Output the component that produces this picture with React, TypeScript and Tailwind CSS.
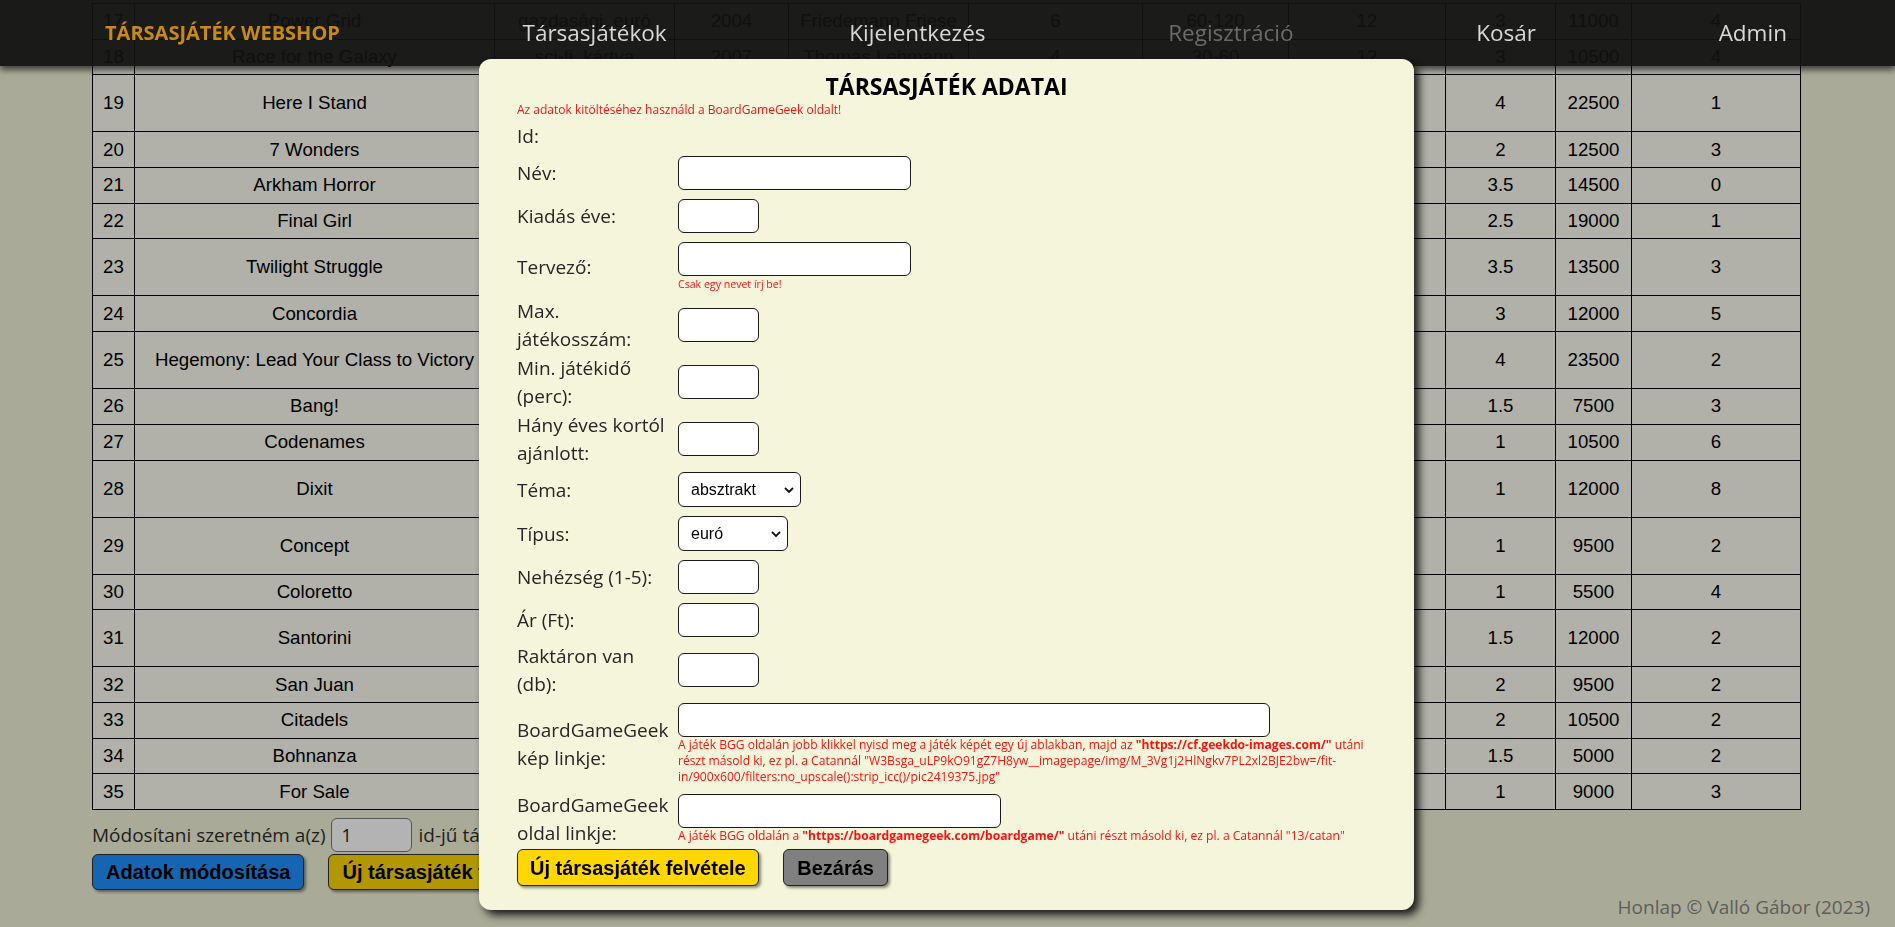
import React from 'react';

type Game = {
  id: number;
  name: string;
  theme: string;
  year: number;
  designer: string;
  players: number;
  time: string;
  age: number;
  weight: string;
  price: number;
  stock: number;
  tall?: boolean;
};

const games: Game[] = [
  { id: 17, name: 'Power Grid', theme: 'gazdasági, euró', year: 2004, designer: 'Friedemann Friese', players: 6, time: '60-120', age: 12, weight: '3', price: 11000, stock: 4 },
  { id: 18, name: 'Race for the Galaxy', theme: 'sci-fi, kártya', year: 2007, designer: 'Thomas Lehmann', players: 4, time: '30-60', age: 12, weight: '3', price: 10500, stock: 4 },
  { id: 19, name: 'Here I Stand', theme: 'történelmi', year: 2006, designer: 'Ed Beach', players: 6, time: '360', age: 12, weight: '4', price: 22500, stock: 1, tall: true },
  { id: 20, name: '7 Wonders', theme: 'civilizáció', year: 2010, designer: 'Antoine Bauza', players: 7, time: '30', age: 10, weight: '2', price: 12500, stock: 3 },
  { id: 21, name: 'Arkham Horror', theme: 'horror', year: 2005, designer: 'Richard Launius', players: 8, time: '120-240', age: 12, weight: '3.5', price: 14500, stock: 0 },
  { id: 22, name: 'Final Girl', theme: 'horror', year: 2021, designer: 'Evan Derrick', players: 1, time: '20-60', age: 14, weight: '2.5', price: 19000, stock: 1 },
  { id: 23, name: 'Twilight Struggle', theme: 'történelmi', year: 2005, designer: 'Ananda Gupta', players: 2, time: '120-180', age: 13, weight: '3.5', price: 13500, stock: 3, tall: true },
  { id: 24, name: 'Concordia', theme: 'gazdasági, euró', year: 2013, designer: 'Mac Gerdts', players: 5, time: '90', age: 13, weight: '3', price: 12000, stock: 5 },
  { id: 25, name: 'Hegemony: Lead Your Class to Victory', theme: 'gazdasági', year: 2023, designer: 'Varnavas', players: 4, time: '90-180', age: 14, weight: '4', price: 23500, stock: 2, tall: true },
  { id: 26, name: 'Bang!', theme: 'western', year: 2002, designer: 'Emiliano Sciarra', players: 7, time: '20-40', age: 8, weight: '1.5', price: 7500, stock: 3 },
  { id: 27, name: 'Codenames', theme: 'party', year: 2015, designer: 'Vlaada Chvátil', players: 8, time: '15', age: 14, weight: '1', price: 10500, stock: 6 },
  { id: 28, name: 'Dixit', theme: 'party, fantasy', year: 2008, designer: 'Jean-Louis Roubira', players: 6, time: '30', age: 8, weight: '1', price: 12000, stock: 8, tall: true },
  { id: 29, name: 'Concept', theme: 'party', year: 2013, designer: 'Gaëtan Beaujannot', players: 12, time: '40', age: 10, weight: '1', price: 9500, stock: 2, tall: true },
  { id: 30, name: 'Coloretto', theme: 'kártya', year: 2003, designer: 'Michael Schacht', players: 5, time: '30', age: 8, weight: '1', price: 5500, stock: 4 },
  { id: 31, name: 'Santorini', theme: 'absztrakt', year: 2016, designer: 'Gordon Hamilton', players: 4, time: '20', age: 8, weight: '1.5', price: 12000, stock: 2, tall: true },
  { id: 32, name: 'San Juan', theme: 'kártya', year: 2004, designer: 'Andreas Seyfarth', players: 4, time: '45-60', age: 10, weight: '2', price: 9500, stock: 2 },
  { id: 33, name: 'Citadels', theme: 'kártya', year: 2000, designer: 'Bruno Faidutti', players: 8, time: '20-60', age: 10, weight: '2', price: 10500, stock: 2 },
  { id: 34, name: 'Bohnanza', theme: 'kártya', year: 1997, designer: 'Uwe Rosenberg', players: 7, time: '45', age: 12, weight: '1.5', price: 5000, stock: 2 },
  { id: 35, name: 'For Sale', theme: 'kártya', year: 1997, designer: 'Stefan Dorra', players: 6, time: '30', age: 10, weight: '1', price: 9000, stock: 3 },
];

const colWidths = ['w-[42px]', 'w-[360px]', 'w-[180px]', 'w-[114px]', 'w-[180px]', 'w-[174px]', 'w-[146px]', 'w-[157px]', 'w-[110px]', 'w-[76px]', 'w-[169px]'];

function FormRow({ label, children }: { label: React.ReactNode; children?: React.ReactNode }) {
  return (
    <div className="flex items-center">
      <div className="w-[161px] shrink-0 leading-[28px] whitespace-nowrap">{label}</div>
      <div className="py-[4px]">{children}</div>
    </div>
  );
}

function TextInput({ width }: { width: string }) {
  return <input type="text" className={`${width} h-[34px] bg-white border border-[#1a1a1a] rounded-[6px] block`} />;
}

function Select({ width, value, options }: { width: string; value: string; options: string[] }) {
  return (
    <div className={`relative ${width}`}>
      <select
        defaultValue={value}
        className="appearance-none w-full h-[35px] bg-white border border-[#1a1a1a] rounded-[6px] pl-[12px] text-[16px] text-black font-['Liberation_Sans',Arial,sans-serif]"
      >
        {options.map((o) => (
          <option key={o}>{o}</option>
        ))}
      </select>
      <svg className="absolute right-[7px] top-[15px] pointer-events-none" width="10" height="6" viewBox="0 0 10 6">
        <path d="M1 1 L5 5 L9 1" fill="none" stroke="#111" strokeWidth="1.8" />
      </svg>
    </div>
  );
}

export default function App() {
  return (
    <div className="min-h-screen bg-[#aaaa98] font-['Open_Sans',sans-serif] pt-[3px]">
      {/* Table with games */}
      <table className="table-fixed border-collapse w-[1708px] ml-[92px] bg-[#b1b1a9] font-['Liberation_Sans',Arial,sans-serif] text-[14pt] text-black">
        <colgroup>
          {colWidths.map((w, i) => (
            <col key={i} className={w} />
          ))}
        </colgroup>
        <tbody>
          {games.map((g) => (
            <tr key={g.id} className={g.tall ? 'h-[57px]' : 'h-[35.7px]'}>
              <td className="border border-black text-center">{g.id}</td>
              <td className="border border-black text-center">{g.name}</td>
              <td className="border border-black text-center">{g.theme}</td>
              <td className="border border-black text-center">{g.year}</td>
              <td className="border border-black text-center">{g.designer}</td>
              <td className="border border-black text-center">{g.players}</td>
              <td className="border border-black text-center">{g.time}</td>
              <td className="border border-black text-center">{g.age}</td>
              <td className="border border-black text-center">{g.weight}</td>
              <td className="border border-black text-center">{g.price}</td>
              <td className="border border-black text-center">{g.stock}</td>
            </tr>
          ))}
        </tbody>
      </table>

      {/* Modify controls */}
      <div className="ml-[92px] mt-[8px] flex items-center text-[19px] text-[#1e1e1e]">
        <span>Módosítani szeretném a(z)</span>
        <input
          type="text"
          defaultValue="1"
          className="ml-[5px] mr-[7px] w-[81px] h-[34px] bg-[#b3b3b3] border border-[#555] rounded-[6px] pl-[10px] text-[18px] text-[#111]"
        />
        <span>id-jű társasjáték adatait</span>
      </div>
      <div className="ml-[92px] mt-[2px] flex gap-[24px] font-['Liberation_Sans',Arial,sans-serif] font-bold text-[20px] text-black">
        <button className="h-[36px] px-[13px] bg-[#1565b3] border border-[#222] rounded-[6px] shadow-[2px_2px_3px_rgba(0,0,0,0.45)]">
          Adatok módosítása
        </button>
        <button className="h-[36px] px-[13px] bg-[#b39700] border border-[#222] rounded-[6px] shadow-[2px_2px_3px_rgba(0,0,0,0.45)]">
          Új társasjáték felvétele
        </button>
      </div>

      {/* Footer */}
      <div className="text-right pr-[25px] mt-[3px] text-[19px] text-[#5e5e5a]">Honlap © Valló Gábor (2023)</div>

      {/* Navbar */}
      <nav className="fixed top-0 left-0 right-0 h-[66px] bg-[rgba(17,17,17,0.94)] shadow-[0_4px_6px_rgba(0,0,0,0.6)] flex items-center justify-between pl-[105px] pr-[108px] text-[22.5px] text-[#d8d8d8]">
        <span className="text-[20px] font-bold text-[#c98a14]">TÁRSASJÁTÉK WEBSHOP</span>
        <span>Társasjátékok</span>
        <span>Kijelentkezés</span>
        <span className="text-[#6b6b6b]">Regisztráció</span>
        <span>Kosár</span>
        <span>Admin</span>
      </nav>

      {/* Modal */}
      <div className="fixed left-[479px] top-[59px] w-[935px] h-[851px] bg-[#f5f5dc] rounded-[12px] shadow-[5px_5px_8px_rgba(0,0,0,0.85)] px-[38px] pt-[12px] text-[19px] text-[#262626]">
        <h2 className="text-center text-[23px] font-bold text-black leading-[31px]">TÁRSASJÁTÉK ADATAI</h2>
        <div className="text-[12px] leading-[15px] text-[#ff1010]">Az adatok kitöltéséhez használd a BoardGameGeek oldalt!</div>

        <div className="mt-[4px] flex flex-col gap-[1px]">
          <div className="h-[30px] flex items-center leading-[28px]">Id:</div>
          <FormRow label="Név:">
            <TextInput width="w-[233px]" />
          </FormRow>
          <FormRow label="Kiadás éve:">
            <TextInput width="w-[81px]" />
          </FormRow>
          <FormRow label="Tervező:">
            <TextInput width="w-[233px]" />
            <div className="text-[10.6px] leading-[16px] text-[#ff1010] whitespace-nowrap">Csak egy nevet írj be!</div>
          </FormRow>
          <FormRow label={<>Max.<br />játékosszám:</>}>
            <TextInput width="w-[81px]" />
          </FormRow>
          <FormRow label={<>Min. játékidő<br />(perc):</>}>
            <TextInput width="w-[81px]" />
          </FormRow>
          <FormRow label={<>Hány éves kortól<br />ajánlott:</>}>
            <TextInput width="w-[81px]" />
          </FormRow>
          <FormRow label="Téma:">
            <Select width="w-[123px]" value="absztrakt" options={['absztrakt', 'gazdasági', 'történelmi', 'party']} />
          </FormRow>
          <FormRow label="Típus:">
            <Select width="w-[110px]" value="euró" options={['euró', 'amerikai', 'kártya']} />
          </FormRow>
          <FormRow label="Nehézség (1-5):">
            <TextInput width="w-[81px]" />
          </FormRow>
          <FormRow label="Ár (Ft):">
            <TextInput width="w-[81px]" />
          </FormRow>
          <FormRow label={<>Raktáron van<br />(db):</>}>
            <TextInput width="w-[81px]" />
          </FormRow>
          <FormRow label={<>BoardGameGeek<br />kép linkje:</>}>
            <TextInput width="w-[592px]" />
            <div className="text-[12.1px] leading-[16px] text-[#ff1010] whitespace-nowrap">
              A játék BGG oldalán jobb klikkel nyisd meg a játék képét egy új ablakban, majd az <b>"https://cf.geekdo-images.com/"</b> utáni
              <br />
              részt másold ki, ez pl. a Catannál "W3Bsga_uLP9kO91gZ7H8yw__imagepage/img/M_3Vg1j2HlNgkv7PL2xl2BJE2bw=/fit-
              <br />
              in/900x600/filters:no_upscale():strip_icc()/pic2419375.jpg"
            </div>
          </FormRow>
          <FormRow label={<>BoardGameGeek<br />oldal linkje:</>}>
            <TextInput width="w-[323px]" />
            <div className="text-[12.1px] leading-[16px] text-[#ff1010] whitespace-nowrap">
              A játék BGG oldalán a <b>"https://boardgamegeek.com/boardgame/"</b> utáni részt másold ki, ez pl. a Catannál "13/catan"
            </div>
          </FormRow>
        </div>

        <div className="mt-[1px] flex gap-[24px] font-['Liberation_Sans',Arial,sans-serif] font-bold text-[20px] text-black">
          <button className="h-[37px] px-[12px] bg-[#ffd700] border border-[#222] rounded-[6px] shadow-[2px_2px_3px_rgba(0,0,0,0.45)]">
            Új társasjáték felvétele
          </button>
          <button className="h-[37px] px-[13.5px] bg-[#808080] border border-[#222] rounded-[6px] shadow-[2px_2px_3px_rgba(0,0,0,0.45)]">
            Bezárás
          </button>
        </div>
      </div>
    </div>
  );
}
